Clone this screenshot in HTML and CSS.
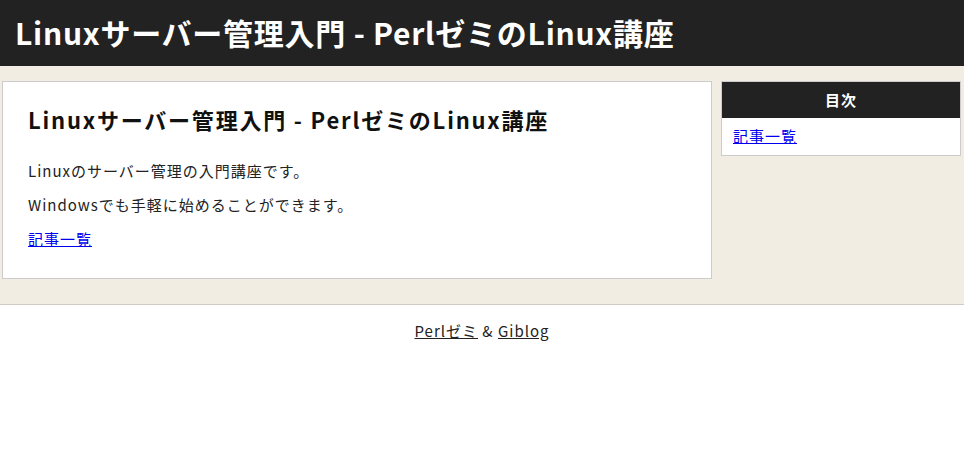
FILE: index.html
```html
<!DOCTYPE html>
<html lang="ja">
<head>
<meta charset="utf-8">
<title>Linuxサーバー管理入門 - PerlゼミのLinux講座</title>
<link rel="stylesheet" href="styles.css">
</head>
<body>
<header class="site-header">
  <h1 class="site-title">Linuxサーバー管理入門 - PerlゼミのLinux講座</h1>
</header>
<div class="container">
  <main class="entry">
    <h2 class="entry-title">Linuxサーバー管理入門 - PerlゼミのLinux講座</h2>
    <p>Linuxのサーバー管理の入門講座です。</p>
    <p>Windowsでも手軽に始めることができます。</p>
    <p><a href="#">記事一覧</a></p>
  </main>
  <aside class="side">
    <div class="side-title">目次</div>
    <div class="side-body"><a href="#">記事一覧</a></div>
  </aside>
</div>
<footer class="site-footer">
  <a href="#">Perlゼミ</a> &amp; <a href="#">Giblog</a>
</footer>
</body>
</html>
```
FILE: styles.css
```css
html, body {
  margin: 0;
  padding: 0;
}
body {
  font-family: "Noto Sans CJK JP", "Noto Sans", sans-serif;
  font-size: 15px;
  letter-spacing: 1px;
  color: #222;
  background: #fff;
}
a { color: #00e; }
.site-header {
  background: #222;
  height: 66px;
  display: flex;
  align-items: center;
  padding: 0 15px;
}
.site-title {
  margin: 0 0 2px;
  color: #fff;
  font-size: 30px;
  font-weight: bold;
  line-height: 1;
  letter-spacing: 0.75px;
}
.container {
  background: #f1ede2;
  display: flex;
  align-items: flex-start;
  gap: 9px;
  padding: 15px 3px 25px 2px;
  border-bottom: 1px solid #d0ccc4;
}
.entry {
  flex: 0 0 710px;
  box-sizing: border-box;
  background: #fff;
  border: 1px solid #ccc;
  padding: 21px 25px 17px;
}
.entry-title {
  margin: 0 0 24px;
  font-size: 22px;
  font-weight: bold;
  line-height: 32px;
  letter-spacing: 1.8px;
  color: #111;
}
.entry p {
  margin: 0 0 10px;
  line-height: 24px;
}
.side {
  flex: 1;
  background: #fff;
  border: 1px solid #ccc;
}
.side-title {
  background: #222;
  color: #fff;
  font-weight: bold;
  text-align: center;
  height: 36px;
  line-height: 36px;
  font-size: 15px;
}
.side-body {
  padding: 7px 11px 8px;
  line-height: 22px;
}
.site-footer {
  text-align: center;
  padding: 15px 0;
  line-height: 22px;
}
.site-footer a { color: #222; }
```
